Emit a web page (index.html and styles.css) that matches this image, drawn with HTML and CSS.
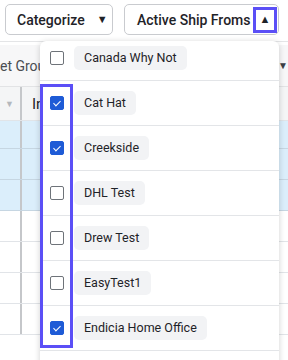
FILE: index.html
```html
<!DOCTYPE html>
<html lang="en">
<head>
    <meta charset="UTF-8">
    <meta name="viewport" content="width=device-width, initial-scale=1.0">
    <title>Active Ship Froms</title>
    <link rel="stylesheet" href="styles.css">
</head>
<body>
    <div class="toolbar">
        <button class="btn btn-cat">Categorize <span class="caret">&#9660;</span></button>
        <button class="btn btn-ship">Active Ship Froms <span class="caret-box">&#9650;</span></button>
    </div>

    <div class="grid">
        <div class="filter-bar">
            <span class="filter-text">et Groups</span>
            <span class="filter-caret">&#9660;</span>
        </div>
        <div class="grid-head">
            <div class="cell cell-sel"><span class="head-caret">&#9660;</span></div>
            <div class="cell">In</div>
        </div>
        <div class="grid-row selected"><div class="cell cell-sel"></div><div class="cell"></div></div>
        <div class="grid-row selected"><div class="cell cell-sel"></div><div class="cell"></div></div>
        <div class="grid-row selected"><div class="cell cell-sel"></div><div class="cell"></div></div>
        <div class="grid-row"><div class="cell cell-sel"></div><div class="cell"></div></div>
        <div class="grid-row"><div class="cell cell-sel"></div><div class="cell"></div></div>
        <div class="grid-row"><div class="cell cell-sel"></div><div class="cell"></div></div>
        <div class="grid-row"><div class="cell cell-sel"></div><div class="cell"></div></div>
    </div>

    <div class="dropdown">
        <ul class="ship-list">
            <li class="ship-item"><span class="check"></span><span class="chip">Canada Why Not</span></li>
            <li class="ship-item"><span class="check on"></span><span class="chip">Cat Hat</span></li>
            <li class="ship-item"><span class="check on"></span><span class="chip">Creekside</span></li>
            <li class="ship-item"><span class="check"></span><span class="chip">DHL Test</span></li>
            <li class="ship-item"><span class="check"></span><span class="chip">Drew Test</span></li>
            <li class="ship-item"><span class="check"></span><span class="chip">EasyTest1</span></li>
            <li class="ship-item"><span class="check on"></span><span class="chip">Endicia Home Office</span></li>
        </ul>
    </div>

    <!-- highlight over the checkbox column -->
    <div class="focus-checks"></div>
</body>
</html>
```

FILE: styles.css
```css
body {
    margin: 0;
    font-family: 'Roboto', 'Liberation Sans', sans-serif;
    color: #1f2328;
    background: #fff;
    width: 288px;
    height: 360px;
    overflow: hidden;
    position: relative;
}
.toolbar {
    display: flex;
    gap: 11px;
    padding: 4px 0 0 5px;
    height: 42px;
    box-sizing: border-box;
    border-bottom: 1px solid #e4e5e7;
}
.btn {
    display: flex;
    align-items: center;
    height: 31px;
    background: #fff;
    border: 1px solid #c9cbcf;
    border-radius: 5px;
    font-family: inherit;
    font-size: 14px;
    font-weight: 500;
    color: #1f2328;
    padding: 0;
    white-space: nowrap;
    box-sizing: border-box;
}
.btn-cat {
    width: 108px;
    padding-left: 11px;
}
.caret {
    font-size: 11px;
    margin-left: 12px;
}
.btn-ship {
    width: 155px;
    padding-left: 12px;
    padding-right: 1px;
}
.caret-box {
    margin-left: auto;
    width: 24px;
    height: 26px;
    box-sizing: border-box;
    border: 3px solid #5b4ff6;
    font-size: 11px;
    display: flex;
    align-items: center;
    justify-content: center;
}

/* grid behind the dropdown */
.grid {
    background: #fff;
}
.filter-bar {
    height: 45px;
    background: #f7f7f8;
    border-top: 3px solid #fff;
    border-bottom: 1px solid #e2e3e5;
    display: flex;
    align-items: center;
    justify-content: space-between;
    font-size: 14px;
    color: #4a4d52;
    box-sizing: border-box;
}
.filter-caret {
    font-size: 10px;
    color: #3c4046;
    margin-right: 0;
}
.grid-head,
.grid-row {
    display: flex;
    height: 31px;
    box-sizing: border-box;
    border-bottom: 1px solid #e1e4e8;
}
.grid-head {
    height: 34px;
    background: #f4f5f6;
    font-size: 15px;
    align-items: center;
}
.grid-head + .grid-row {
    height: 28px;
}
.grid-row.selected {
    background: #dbeefb;
    border-bottom-color: #c6d6e2;
}
.cell {
    display: flex;
    align-items: center;
    padding-left: 10px;
}
.cell-sel {
    width: 22px;
    padding-left: 5px;
    box-sizing: border-box;
    align-self: stretch;
    border-right: 2px solid #c5c7ca;
}
.head-caret {
    font-size: 9px;
    color: #b4b8bd;
}

/* dropdown */
.dropdown {
    position: absolute;
    left: 40px;
    top: 41px;
    width: 239px;
    height: 330px;
    background: #fff;
    border-radius: 6px;
    box-shadow: 0 1px 6px rgba(0, 0, 0, 0.18);
    overflow: hidden;
}
.ship-list {
    list-style: none;
    margin: -5px 0 0;
    padding: 0;
}
.ship-item {
    display: flex;
    align-items: center;
    height: 45px;
    box-sizing: border-box;
    border-bottom: 1px solid #e3e5e8;
    padding-left: 10px;
}
.check {
    width: 14px;
    height: 14px;
    box-sizing: border-box;
    border: 1.5px solid #6e7379;
    border-radius: 2px;
    margin-right: 10px;
    position: relative;
}
.check.on {
    background: #1e5bd6;
    border-color: #1e5bd6;
}
.check.on::after {
    content: '';
    position: absolute;
    left: 3.5px;
    top: 1.5px;
    width: 3px;
    height: 6px;
    border: solid #fff;
    border-width: 0 1.3px 1.3px 0;
    transform: rotate(45deg);
}
.chip {
    background: #f2f3f5;
    border-radius: 5px;
    padding: 0 10px;
    height: 24px;
    line-height: 24px;
    font-size: 12.5px;
    color: #1f2328;
}
.focus-checks {
    position: absolute;
    left: 40px;
    top: 84px;
    width: 33px;
    height: 264px;
    box-sizing: border-box;
    border: 3px solid #5b4ff6;
}
```
